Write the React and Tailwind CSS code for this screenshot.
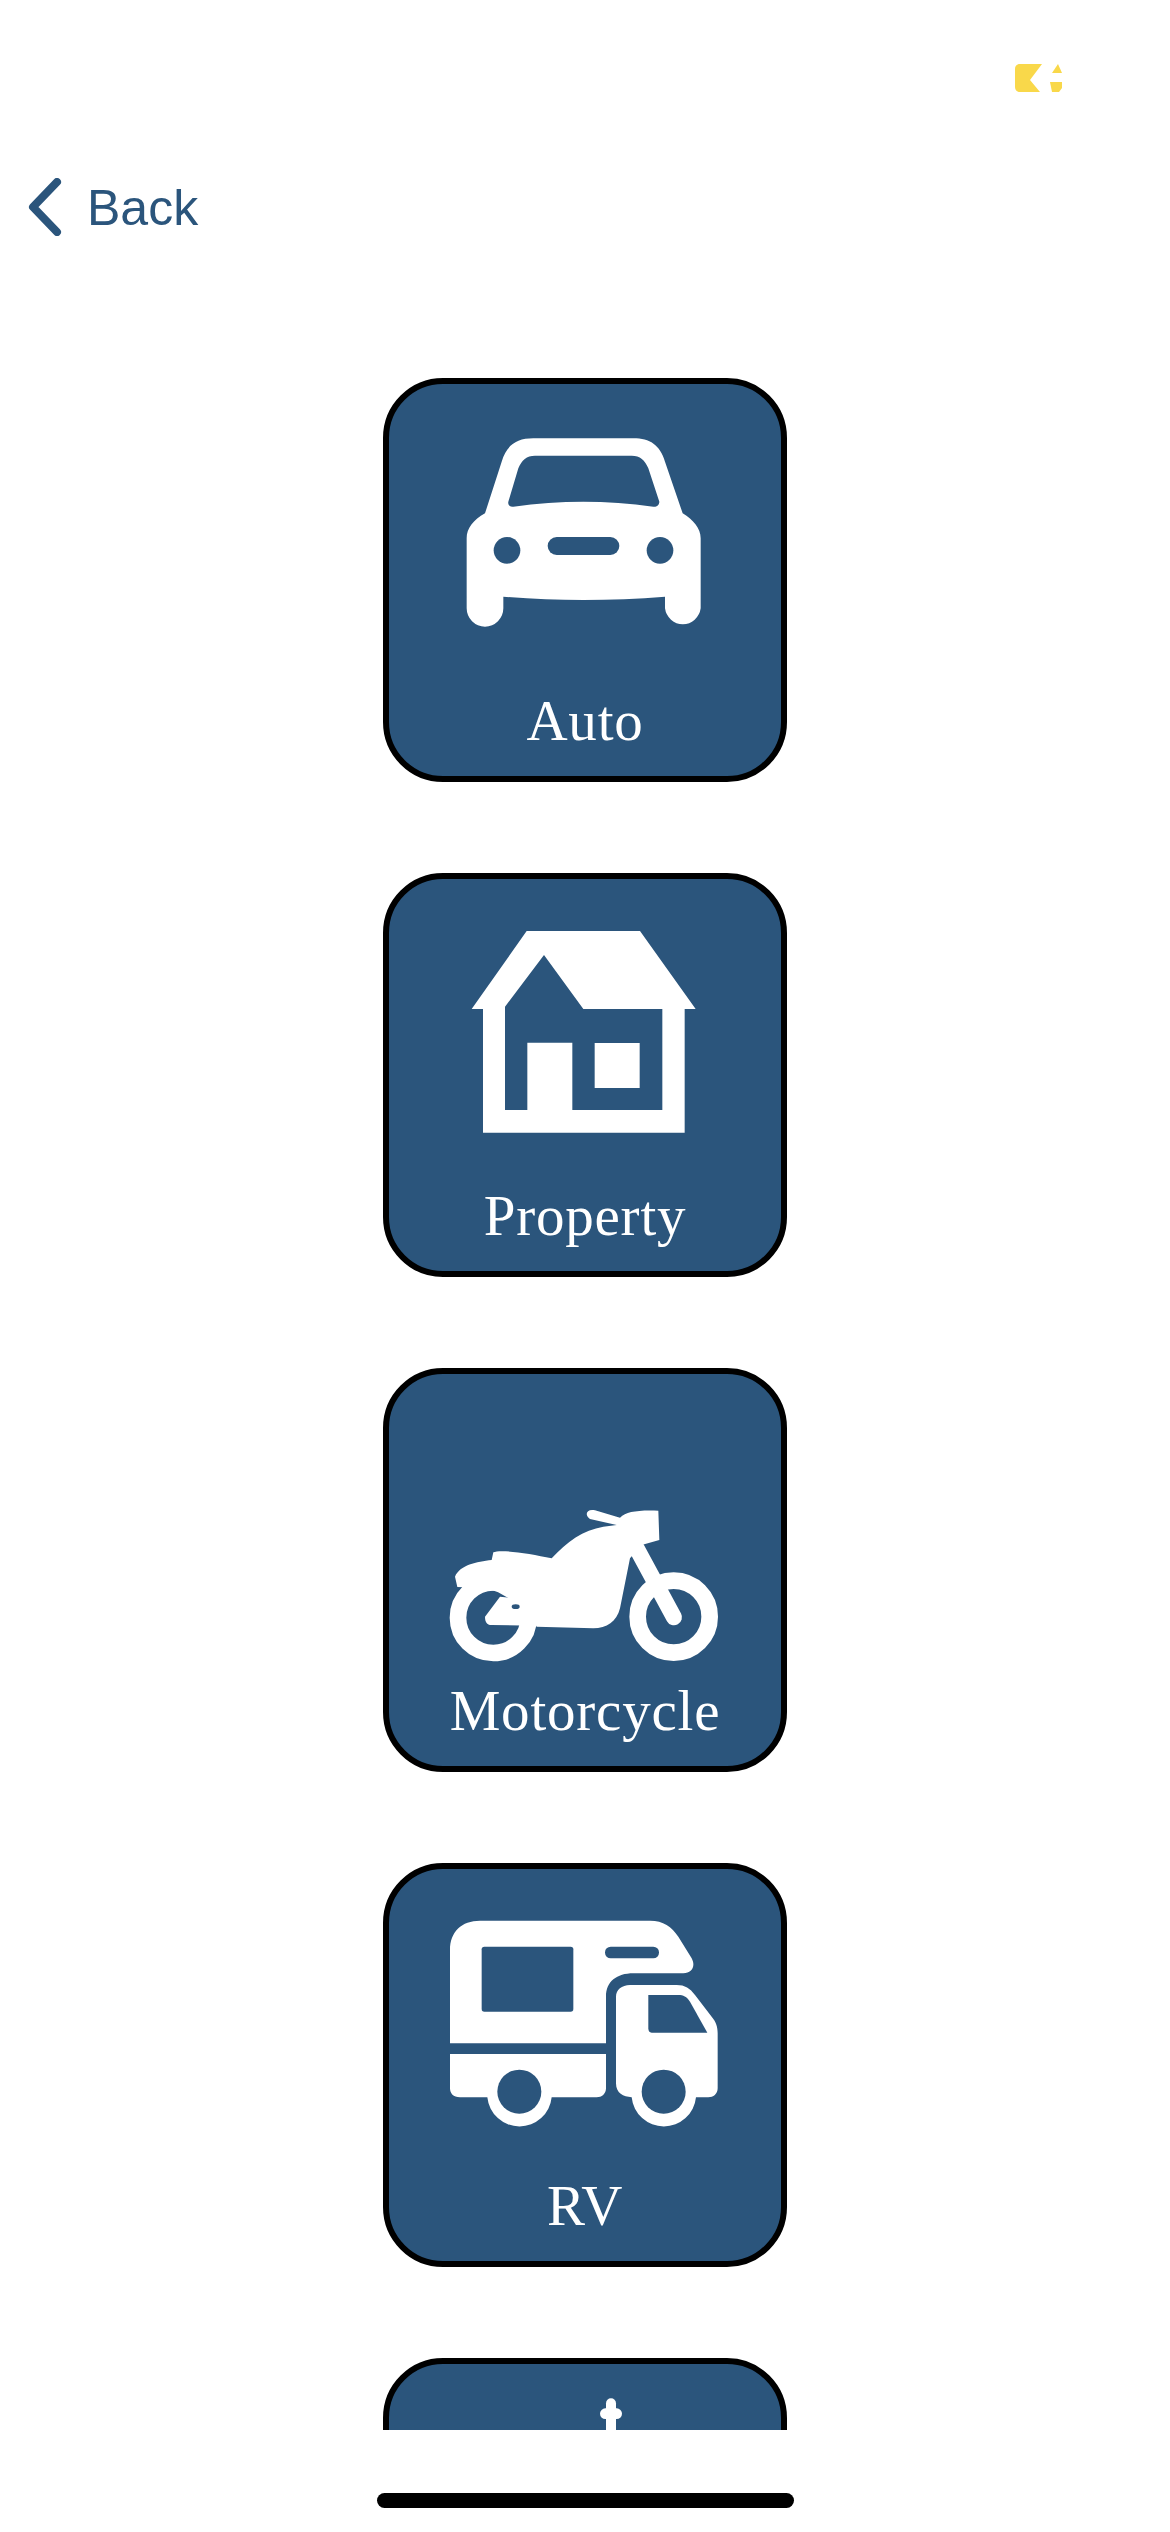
import React from 'react';

const BLUE = '#2b557c';

// icons are traced in a shared 1176x870 box, one per card
function IconBox({ children }) {
  return (
    <svg viewBox="57 57 1176 870" className="block w-[392px] h-[290px] shrink-0" fill="#fff">
      {children}
    </svg>
  );
}

function CarIcon() {
  return (
    <IconBox>
      <path d="M290 520C290 490 310 465 345 445L395 290C410 240 440 220 490 220L790 220C840 220 870 240 885 290L938 445C970 465 992 490 992 520L992 730A54 55 0 0 1 885 730L885 695C720 708 560 708 400 695L400 730A55 55 0 0 1 290 730Z" />
      <path fill={BLUE} d="M415 410L445 310C455 285 470 272 495 272L785 272C810 272 825 285 835 310L868 410C868 420 860 426 850 425C710 405 570 405 430 425C420 426 413 420 415 410Z" />
      <circle cx="411" cy="556" r="40" fill={BLUE} />
      <circle cx="870" cy="556" r="40" fill={BLUE} />
      <rect x="533" y="516" width="215" height="54" rx="27" fill={BLUE} />
    </IconBox>
  );
}

function HouseIcon() {
  return (
    <IconBox>
      <path d="M305 447L470 213L810 213L977 447L944 447L944 818L339 818L339 447Z" />
      <path fill={BLUE} d="M405 750L405 440L522 285L640 447L877 447L877 750L607 750L607 548L472 548L472 750Z" />
      <rect x="674" y="549" width="135" height="135" />
    </IconBox>
  );
}

function MotorcycleIcon() {
  return (
    <IconBox>
      <circle cx="370" cy="788" r="106" fill="none" stroke="#fff" strokeWidth="50" />
      <circle cx="911" cy="785" r="108" fill="none" stroke="#fff" strokeWidth="50" />
      <path d="M255 665C270 630 320 620 365 615L370 592C390 582 480 595 545 610C590 560 640 525 700 515L740 510L660 492C642 480 650 460 675 466L750 488C770 470 800 465 865 467L868 555L815 570L780 610L750 760C740 800 710 820 670 820L500 815L470 760L395 718C370 700 320 698 262 696Z" />
      <path d="M345 785L390 725L490 735L495 812L365 810C350 810 345 800 345 785Z" />
      <ellipse cx="437" cy="755" rx="12" ry="7" fill={BLUE} />
      <path d="M800 580L912 787" stroke="#fff" strokeWidth="48" strokeLinecap="round" fill="none" />
    </IconBox>
  );
}

function RvIcon() {
  return (
    <IconBox>
      <path d="M240 300C240 245 275 212 330 212L840 212C880 212 905 230 925 260L965 325C978 350 965 370 940 370L790 370C740 370 708 395 708 440L708 580L240 580Z" />
      <rect x="335" y="290" width="275" height="195" rx="8" fill={BLUE} />
      <rect x="705" y="290" width="162" height="35" rx="17" fill={BLUE} />
      <path d="M240 612L708 612L708 715C708 732 695 742 680 742L545 742A97 97 0 0 1 352 742L270 742C250 742 240 730 240 715Z" />
      <circle cx="448" cy="725" r="66" fill={BLUE} />
      <path d="M738 440C738 420 755 405 780 405L920 405C945 405 960 415 975 435L1025 500C1038 515 1043 530 1043 550L1043 715C1043 732 1030 742 1015 742L978 742A97 97 0 0 1 785 742C760 740 738 730 738 700Z" />
      <path fill={BLUE} d="M835 435L925 435C940 435 950 440 960 455L1012 548L845 548C838 548 835 543 835 535Z" />
      <circle cx="881" cy="725" r="66" fill={BLUE} />
    </IconBox>
  );
}

function MastIcon() {
  return (
    <IconBox>
      <rect x="708" y="160" width="30" height="300" rx="15" />
      <rect x="690" y="190" width="66" height="32" rx="16" />
    </IconBox>
  );
}

function Card({ icon, label }) {
  return (
    <div className="w-[404px] h-[404px] shrink-0 rounded-[60px] border-[6px] border-black bg-[#2b557c] flex flex-col items-center">
      {icon}
      {label && (
        <span className="mt-[17px] text-white text-[57px] leading-[60px] tracking-[0.8px] font-['Liberation_Serif',serif]">{label}</span>
      )}
    </div>
  );
}

export default function App() {
  return (
    <div className="w-[1170px] h-[2532px] bg-white flex flex-col overflow-hidden font-['Liberation_Sans',sans-serif]">
      {/* Status bar, battery is cut off by the white bolt */}
      <div className="h-[150px] shrink-0 pt-[64px] pr-[108px] flex justify-end items-start">
        <svg viewBox="0 0 47 28" className="w-[47px] h-[28px]">
          <path fill="#f9d84a" d="M5 0L27 0L15 16L25 28L5 28C2 28 0 26 0 23L0 5C0 2 2 0 5 0Z" />
          <path fill="#f9d84a" d="M43 0L47 9L37 9Z" />
          <path fill="#f9d84a" d="M35 18L47 18L47 24L44 28L37 28Z" />
        </svg>
      </div>

      {/* Back */}
      <div className="h-[110px] shrink-0 pt-[28px] pl-[28px] flex items-start gap-[25px] text-[#2b557c]">
        <svg viewBox="0 0 34 58" className="w-[34px] h-[58px] shrink-0" fill="none" stroke="currentColor" strokeWidth="8" strokeLinecap="round" strokeLinejoin="round">
          <path d="M29 4L5 29L29 54" />
        </svg>
        <span className="text-[50px] leading-[58px] mt-[1px]">Back</span>
      </div>

      {/* Cards, the list scrolls so the last one is cut */}
      <div className="h-[2170px] shrink-0 pt-[118px] flex flex-col items-center gap-[91px] overflow-hidden">
        <Card icon={<CarIcon />} label="Auto" />
        <Card icon={<HouseIcon />} label="Property" />
        <Card icon={<MotorcycleIcon />} label="Motorcycle" />
        <Card icon={<RvIcon />} label="RV" />
        <Card icon={<MastIcon />} />
      </div>

      {/* Home indicator */}
      <div className="flex-1 pt-[63px] flex justify-center items-start">
        <div className="w-[417px] h-[15px] rounded-full bg-black" />
      </div>
    </div>
  );
}
